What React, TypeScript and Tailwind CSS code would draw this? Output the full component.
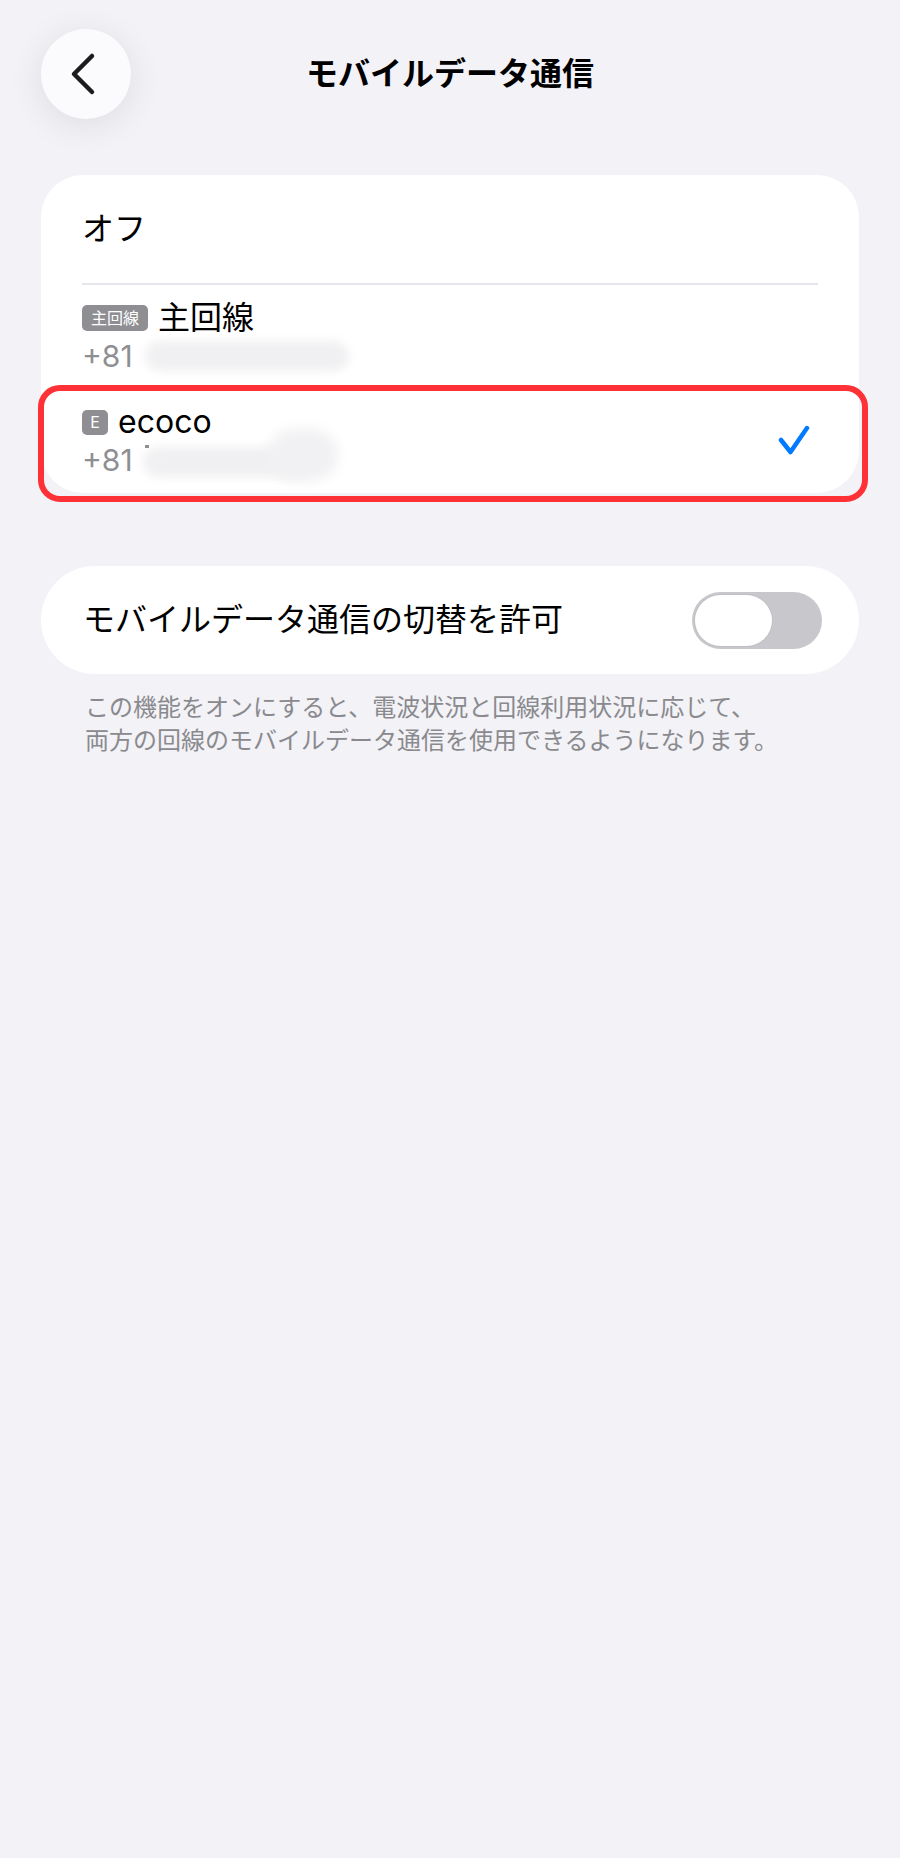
import React from 'react';

const CheckIcon = () => (
    <svg width="34" height="34" viewBox="0 0 34 34" fill="none">
        <polyline points="5,16 14.5,28 31,4" stroke="#007aff" strokeWidth="4.5" strokeLinecap="round" strokeLinejoin="round" />
    </svg>
);

const BackIcon = () => (
    <svg width="28" height="44" viewBox="0 0 28 44" fill="none">
        <polyline points="22,4 4,22 22,40" stroke="#1c1c1e" strokeWidth="4.5" strokeLinecap="round" strokeLinejoin="round" />
    </svg>
);

const LineRow: React.FC<{ badge: string; badgeClass: string; name: string; checked?: boolean; children?: React.ReactNode }> = ({ badge, badgeClass, name, checked, children }) => (
    <div className="h-[104px] flex items-center">
        <div className="flex flex-col">
            <div className="flex items-center gap-[10px] leading-[38px]">
                <span className={`bg-[#8e8e93] text-white rounded-[5px] flex items-center justify-center text-[16px] ${badgeClass}`}>{badge}</span>
                <span className="text-[32px] text-black">{name}</span>
            </div>
            <div className="flex items-center leading-[38px]">
                <span className="text-[30px] text-[#8e8e93]">+81</span>
                {children}
            </div>
        </div>
        {checked && (
            <div className="ml-auto mr-[8px]">
                <CheckIcon />
            </div>
        )}
    </div>
);

export default function App() {
    return (
        <div className="min-h-screen bg-[#f2f2f7] font-['Inter','Noto_Sans_CJK_JP',sans-serif]">
            {/* Header */}
            <div className="grid grid-cols-[90px_1fr_90px] items-center px-[41px] pt-[29px]">
                <button className="w-[90px] h-[90px] rounded-full bg-[#fbfbfd] flex items-center justify-center shadow-[0_6px_36px_rgba(0,0,0,0.09)]">
                    <span className="-ml-[4px] flex"><BackIcon /></span>
                </button>
                <h1 className="text-center text-[32px] font-bold text-black">モバイルデータ通信</h1>
                <div />
            </div>

            <div className="px-[41px] pt-[56px]">
                {/* Line selection */}
                <div className="relative">
                    <div className="bg-white rounded-[42px] px-[41px]">
                        <div className="h-[108px] flex items-center text-[32px] text-black">オフ</div>
                        <div className="h-[2px] bg-[#e5e5ea]" />
                        <LineRow badge="主回線" badgeClass="w-[66px] h-[26px]" name="主回線">
                            <div className="ml-[12px] w-[204px] h-[30px] rounded-full bg-[#f0f0f2] blur-[5px]" />
                        </LineRow>
                        <LineRow badge="E" badgeClass="w-[26px] h-[25px]" name="ecoco" checked>
                            <div className="relative ml-[10px] w-[200px] h-[34px]">
                                <div className="absolute left-0 top-[4px] w-[170px] h-[30px] rounded-full bg-[#f0f0f2] blur-[5px]" />
                                <div className="absolute left-[125px] -top-[14px] w-[70px] h-[52px] rounded-full bg-[#f1f1f3] blur-[6px]" />
                                <div className="absolute left-[2px] top-[2px] w-[4px] h-[3px] bg-[#8e8e93]" />
                            </div>
                        </LineRow>
                    </div>
                    {/* highlight */}
                    <div className="absolute left-[-3px] top-[210px] w-[830px] h-[117px] border-[6px] border-[#fe3236] rounded-[22px] pointer-events-none" />
                </div>

                {/* Switch */}
                <div className="mt-[73px] h-[108px] bg-white rounded-full flex items-center justify-between pl-[42px] pr-[37px]">
                    <span className="text-[32px] text-black">モバイルデータ通信の切替を許可</span>
                    <div className="w-[130px] h-[57px] rounded-full bg-[#c8c8cc] p-[3px] flex items-center">
                        <div className="w-[77px] h-[51px] rounded-full bg-white shadow-[0_0_0_1px_rgba(0,0,0,0.04)]" />
                    </div>
                </div>

                <p className="mt-[17px] px-[44px] text-[24px] leading-[33px] text-[#8a8a8e]">
                    この機能をオンにすると、電波状況と回線利用状況に応じて、<br />
                    両方の回線のモバイルデータ通信を使用できるようになります。
                </p>
            </div>
        </div>
    );
}
